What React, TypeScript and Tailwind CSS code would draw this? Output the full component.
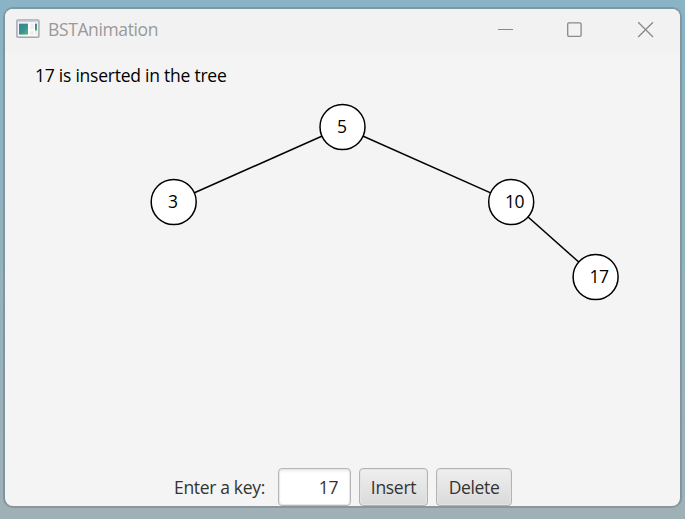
const nodes = [
  { key: '5', x: 342.5, y: 127, tx: 337 },
  { key: '3', x: 173.7, y: 202, tx: 168 },
  { key: '10', x: 511.2, y: 202, tx: 505 },
  { key: '17', x: 595.6, y: 277, tx: 589.5 },
];

const edges = [
  [342.5, 127, 173.7, 202],
  [342.5, 127, 511.2, 202],
  [511.2, 202, 595.6, 277],
];

function AppIcon() {
  return (
    <svg className="mb-[3px] h-[20px] w-[24px] shrink-0" viewBox="0 0 24 20">
      <defs>
        <linearGradient id="screen" x1="0" y1="0" x2="1" y2="1">
          <stop offset="0" stopColor="#3f7fa6" />
          <stop offset="0.5" stopColor="#35928f" />
          <stop offset="1" stopColor="#5cb478" />
        </linearGradient>
      </defs>
      <rect x="0.9" y="0.9" width="22" height="17.4" rx="1" fill="#eff1f4" stroke="#a5a8af" strokeWidth="1.5" />
      <path d="M1.5 2.2H22.3" stroke="#c3c8d2" strokeWidth="1.2" />
      <rect x="2.7" y="4" width="18.5" height="12.6" fill="#fff" />
      <rect x="3" y="4.6" width="9" height="11" fill="url(#screen)" />
      <path d="M14 4.6h4v6h-4zM14 12h4v4h-4zM19 12h2v4h-2z" fill="#eeeeef" />
      <rect x="19" y="4.6" width="2" height="7" fill="url(#screen)" />
    </svg>
  );
}

function TitleBar() {
  return (
    <header className="flex h-[43px] items-center bg-[#f2f2f2] pl-[11px]">
      <AppIcon />
      <span className="mb-[3px] ml-[8px] text-[17.5px] leading-[24px] tracking-[-0.38px] whitespace-nowrap text-[#999]">BSTAnimation</span>
      <svg className="ml-auto h-[43px] w-[209px]" viewBox="471 9 209 43" fill="none" stroke="#898989" strokeWidth="1.3">
        <path d="M498 29.5H513" strokeWidth="1" />
        <rect x="567.7" y="22.9" width="13.4" height="13.4" rx="1.2" />
        <path d="M638.2 22.2L653 37M653 22.2L638.2 37" />
      </svg>
    </header>
  );
}

function Tree() {
  return (
    <svg className="block h-[320px] w-full" viewBox="5 90 675 320">
      <g stroke="#000" strokeWidth="1.5">
        {edges.map(([x1, y1, x2, y2]) => (
          <line key={`${x1}-${x2}`} x1={x1} y1={y1} x2={x2} y2={y2} />
        ))}
      </g>
      {nodes.map((n) => (
        <g key={n.key}>
          <circle cx={n.x} cy={n.y} r="22.5" fill="#fff" stroke="#000" strokeWidth="1.5" />
          <text x={n.tx} y={n.y + 6} fontSize="17.5" letterSpacing="-0.5">{n.key}</text>
        </g>
      ))}
    </svg>
  );
}

const buttonClass =
  'flex h-[38px] items-center justify-center rounded-[4px] border border-[#b3b3b3] bg-linear-to-b from-[#efefef] to-[#dadada] text-[17.5px] whitespace-nowrap text-[#333] shadow-[inset_0_0_0_1px_#e4e4e4]';

export default function App() {
  return (
    <div className="h-[519px] w-[685px] bg-linear-to-b from-[#8ab3c6] via-[#92b3bd] to-[#a0b0b7] px-[3px] pt-[7px] font-['Open_Sans','Noto_Sans',sans-serif]">
      <div className="flex h-[501px] w-[679px] flex-col overflow-hidden rounded-[10px] border-2 border-t-[#7b98a5] border-r-[#7f969f] border-b-[#8b9698] border-l-[#7f969f] bg-[#f4f4f4]">
        <TitleBar />
        <p className="h-[38px] pt-[11px] pl-[30px] text-[17.5px] leading-[24px] tracking-[-0.24px] whitespace-nowrap text-black">17 is inserted in the tree</p>
        <Tree />
        <form className="mt-auto flex h-[38px] items-center pl-[169px]" onSubmit={(e) => e.preventDefault()}>
          <label htmlFor="key" className="w-[104px] text-[17.5px] tracking-[-0.33px] whitespace-nowrap text-[#333]">Enter a key:</label>
          <input
            id="key"
            defaultValue="17"
            className="h-[38px] w-[73px] rounded-[4px] border border-[#b5b5b5] bg-white pr-[12px] text-right text-[17.5px] tracking-[-0.4px] text-[#333] shadow-[inset_0_0_0_1px_#e8e8e8,inset_0_2px_3px_#e9e9e9] outline-none"
          />
          <button className={`${buttonClass} ml-[8px] w-[69px] tracking-[-0.3px]`}>Insert</button>
          <button className={`${buttonClass} ml-[8px] w-[76px] tracking-[-0.35px]`}>Delete</button>
        </form>
      </div>
    </div>
  );
}
